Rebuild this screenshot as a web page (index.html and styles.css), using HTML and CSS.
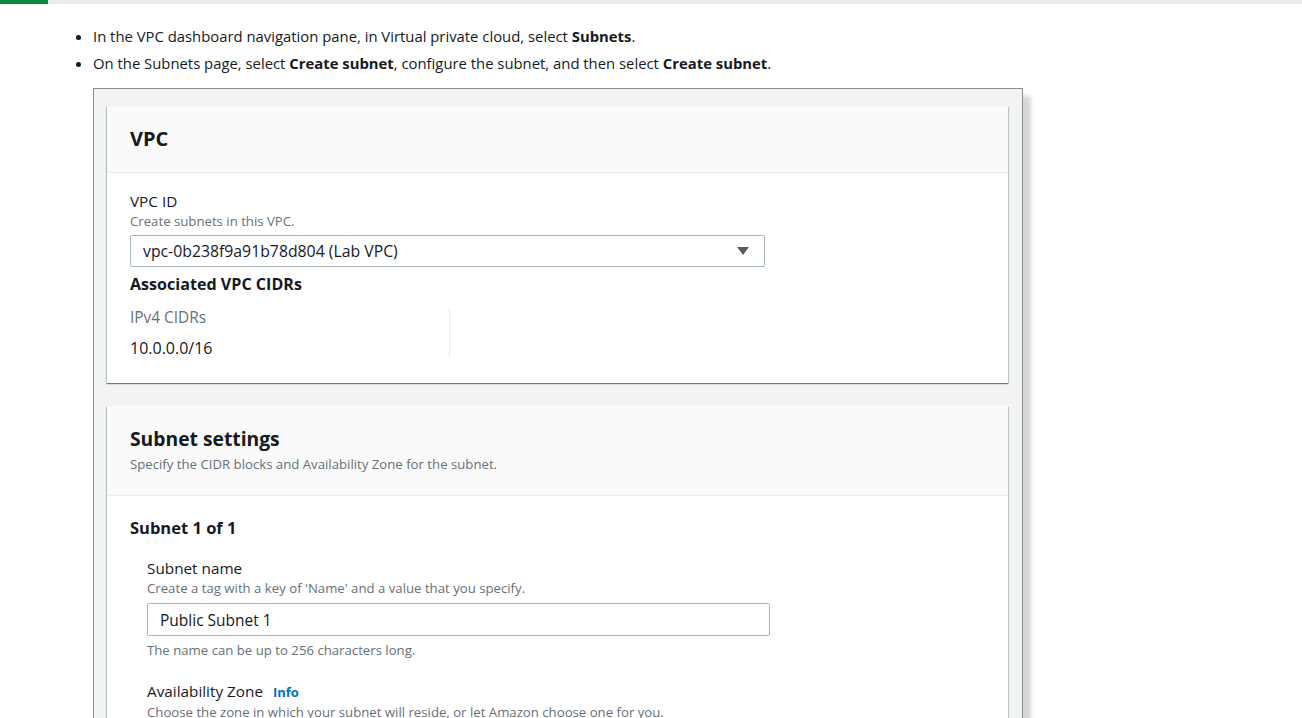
FILE: index.html
```html
<!DOCTYPE html>
<html>
<head>
<meta charset="utf-8">
<link rel="stylesheet" href="styles.css">
</head>
<body>
<div class="progress"><div class="progress-fill"></div></div>
<ul class="steps">
  <li>In the VPC dashboard navigation pane, in Virtual private cloud, select <b>Subnets</b>.</li>
  <li>On the Subnets page, select <b>Create subnet</b>, configure the subnet, and then select <b>Create subnet</b>.</li>
</ul>
<div class="shot">
  <section class="card">
    <div class="card-head"><h2 class="title">VPC</h2></div>
    <div class="card-body">
      <div class="label">VPC ID</div>
      <div class="desc">Create subnets in this VPC.</div>
      <div class="select">
        <span>vpc-0b238f9a91b78d804 (Lab VPC)</span>
        <svg class="caret" width="12" height="8" viewBox="0 0 12 8"><polygon points="0,0 12,0 6,8" fill="#545b64"/></svg>
      </div>
      <div class="subhead">Associated VPC CIDRs</div>
      <div class="cidrs">
        <div class="cidr-col">
          <div class="kv-key">IPv4 CIDRs</div>
          <div class="kv-val">10.0.0.0/16</div>
        </div>
      </div>
    </div>
  </section>
  <section class="card">
    <div class="card-head tall">
      <h2 class="title big">Subnet settings</h2>
      <div class="desc head-desc">Specify the CIDR blocks and Availability Zone for the subnet.</div>
    </div>
    <div class="card-body">
      <div class="subnet-title">Subnet 1 of 1</div>
      <div class="group">
        <div class="label">Subnet name</div>
        <div class="desc">Create a tag with a key of 'Name' and a value that you specify.</div>
        <div class="input">Public Subnet 1</div>
        <div class="desc hint">The name can be up to 256 characters long.</div>
        <div class="label az">Availability Zone <span class="info">Info</span></div>
        <div class="desc">Choose the zone in which your subnet will reside, or let Amazon choose one for you.</div>
      </div>
    </div>
  </section>
</div>
</body>
</html>
```
FILE: styles.css
```css
html, body { margin: 0; padding: 0; background: #fff; overflow: hidden; }
body { font-family: "Open Sans", "Noto Sans", sans-serif; color: #16191f; height: 718px; }
.progress { height: 4px; background: #ebebeb; }
.progress-fill { width: 48px; height: 4px; background: #0b8a3f; }
.steps { margin: 0; padding: 19px 0 0 93px; font-size: 14.85px; line-height: 27px; color: #16191f; }
.steps b { font-weight: 700; }
.shot {
  margin: 11px 0 0 93px;
  width: 930px;
  height: 700px;
  border: 1px solid #8e8e8e;
  background: #f2f3f3;
  box-shadow: 8px 8px 4px rgba(0,0,0,0.16);
  padding: 17px 14px 0 13px;
  box-sizing: border-box;
  font-family: "Open Sans", Roboto, sans-serif;
  display: flex;
  flex-direction: column;
  gap: 23px;
}
.card {
  background: #fff;
  box-shadow: 0 1px 1px 0 rgba(0,28,36,.35), 1px 1px 1px 0 rgba(0,28,36,.18), -1px 1px 1px 0 rgba(0,28,36,.18);
}
.card-head { background: #fafafa; border-bottom: 1px solid #eaeded; padding: 19px 23px; }
.card-head.tall { padding: 20px 23px 22px; }
.title { margin: 0; font-size: 20px; line-height: 28px; font-weight: 700; }
.title.big { font-size: 19.3px; line-height: 26px; }
.head-desc { margin-top: 3px; }
.card-body { padding: 17px 23px 25px; }
.label { font-size: 15.3px; line-height: 22px; }
.desc { font-size: 13.2px; line-height: 18px; color: #687078; }
.select {
  margin-top: 5px; width: 635px; height: 32px; box-sizing: border-box;
  border: 1px solid #aab7b8; border-radius: 2px;
  display: flex; align-items: center; justify-content: space-between;
  padding: 0 15px 0 12px; font-size: 15.8px;
}
.subhead { margin-top: 6px; font-size: 16.1px; line-height: 22px; font-weight: 700; }
.cidrs { margin-top: 13px; display: flex; }
.cidr-col { width: 319px; border-right: 1px solid #eaeded; display: flex; flex-direction: column; gap: 10px; }
.kv-key { font-size: 15.4px; line-height: 20px; color: #687078; }
.kv-val { font-size: 16px; line-height: 20px; }
.subnet-title { margin-top: 3px; font-size: 16.5px; line-height: 24px; font-weight: 700; }
.group { padding: 17px 0 0 17px; }
.input {
  margin-top: 6px; width: 623px; height: 33px; box-sizing: border-box;
  border: 1px solid #aab7b8; border-radius: 2px;
  display: flex; align-items: center; padding-left: 12px; font-size: 15.5px;
}
.hint { margin-top: 5px; }
.az { margin-top: 21px; }
.info { color: #0073bb; font-weight: 700; font-size: 13px; margin-left: 6px; }
```
